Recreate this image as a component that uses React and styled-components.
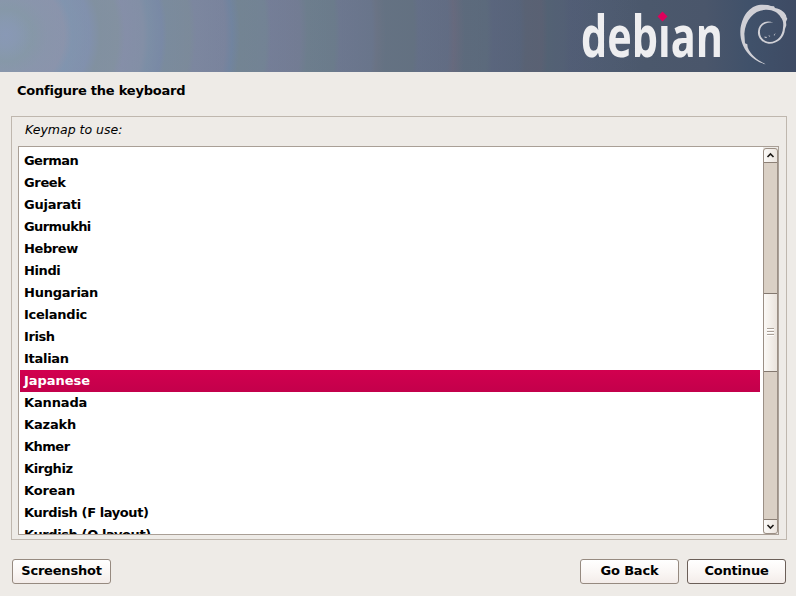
import React from "react";
import styled, { createGlobalStyle } from "styled-components";

const GlobalStyle = createGlobalStyle`
  * { box-sizing: border-box; }
  body {
    margin: 0;
    background: #eeebe7;
    color: #000;
    font: bold 13px "DejaVu Sans", sans-serif;
    overflow: hidden;
  }
`;

const Window = styled.div`
  display: flex;
  flex-direction: column;
  width: 796px;
  height: 596px;
  background: #eeebe7;
`;

const Banner = styled.header`
  display: flex;
  justify-content: flex-end;
  flex: none;
  height: 72px;
  background: linear-gradient(90deg, #8797ae66 0px, #8290a566 120px, #757f9666 270px, #64708466 420px, #55617466 550px, #4b586c00 640px), radial-gradient(circle at 6px 35px,
    #8a9abb 0px, #899ab4 12px, #8699a5 26px, #8c95ac 42px, #8e94ad 58px,
    #7f95b2 66px, #8090b0 84px, #80909c 94px, #83919e 112px, #878eaa 119px,
    #8590a8 137px, #7a8fa8 143px, #7688a8 156px, #788b9b 161px, #7b8b98 184px,
    #7c86a0 190px, #7a839e 219px, #6c84a2 226px, #70858f 234px, #718593 260px,
    #747d98 265px, #737c94 294px, #6a7f8a 302px, #697d89 329px, #6c7790 334px,
    #69758c 366px, #6a7282 371px, #62717f 380px, #62717f 408px, #636e88 413px,
    #626c85 442px, #6b687c 448px, #5b6a7b 459px, #5b6b7c 481px, #59647e 487px,
    #57637b 514px, #5a6172 520px, #5c6072 536px, #526274 542px, #525f75 558px,
    #505c76 565px, #4e5b72 590px, #4b586c 640px, #4a566b 700px, #40516a 745px,
    #3e4b64 790px);
`;

const Heading = styled.h1`
  margin: 0;
  padding: 10px 17px 0;
  height: 44px;
  flex: none;
  font-size: 13px;
  line-height: 17px;
  letter-spacing: -0.23px;
`;

const Frame = styled.section`
  display: flex;
  flex-direction: column;
  flex: none;
  height: 424px;
  margin: 0 9px 0 11px;
  padding: 0 7px 4px 6px;
  border: 1px solid #bfb7ae;
`;

const Prompt = styled.label`
  flex: none;
  height: 29px;
  padding: 4px 6px 4px 7px;
  font-size: 12.5px;
  font-weight: normal;
  font-style: italic;
  line-height: 17px;
`;

const ListBox = styled.div`
  display: flex;
  flex: 1;
  min-height: 0;
  border: 1px solid #a99f96;
  background: #eeebe7;
`;

const Options = styled.ul`
  flex: 1;
  margin: 0;
  padding: 3px 3px 0 1px;
  overflow: hidden;
  list-style: none;
  background: #fff;
`;

const Option = styled.li`
  height: 22px;
  padding-left: 4px;
  line-height: 21px;
  letter-spacing: ${(p) => p.$tracking}px;
  color: ${(p) => (p.$selected ? "#fff" : "#000")};
  background: ${(p) => (p.$selected ? "linear-gradient(#d2004f, #c3004b)" : "none")};
`;

const Scrollbar = styled.div`
  display: flex;
  flex-direction: column;
  width: 15px;
  margin: 1px 0 0;
  border: 1px solid #9b8f85;
  border-radius: 3px;
  background: #dad0c5;
`;

const Arrow = styled.span`
  display: grid;
  place-items: center;
  height: 14px;
  background: linear-gradient(90deg, #fbfaf8, #ece5df);
  border-radius: ${(p) => (p.$down ? "0 0 3px 3px" : "3px 3px 0 0")};
  border-${(p) => (p.$down ? "top" : "bottom")}: 1px solid #8c8076;
`;

const Track = styled.div`
  flex: 1;
  padding-top: 130px;
`;

const Thumb = styled.div`
  display: grid;
  place-items: center;
  height: 79px;
  padding-bottom: 2px;
  border: solid #83786f;
  border-width: 1px 0;
  background: linear-gradient(90deg, #fbf9f6, #eae3dc);
`;

const Actions = styled.footer`
  display: flex;
  gap: 8px;
  padding: 19px 10px 0 12px;
`;

const Button = styled.button`
  width: 99px;
  height: 25px;
  padding: 0 0 2px;
  margin-right: ${(p) => (p.$leading ? "auto" : "0")};
  border: 1px solid ${(p) => (p.$primary ? "#6b5f58" : "#968a80")};
  border-radius: 3px;
  background: linear-gradient(#fff, #faf6f4 55%, #f3ece9);
  color: #000;
  font: inherit;
  letter-spacing: -0.2px;
`;

const Logo = () => (
  <svg width="226" height="72" viewBox="570 0 226 72" overflow="visible">
    <text x="581" y="57" fill="#eeeef0" fontFamily="Open Sans, sans-serif" fontSize="58" fontWeight="700" textLength="142" lengthAdjust="spacingAndGlyphs">debıan</text>
    <path d="M662.5 11.5L667.5 16.5L662.5 21.5L657.5 16.5Z" fill="#df005b" />
    <g transform="translate(734 0) scale(.33333)" fill="#d0d0d6">
      <path d="M95 193C58 184 17 148 19 93C22 48 48 16 80 14L102 15L111 18L120 19L123 24C142 26 158 42 157 51L160 56L156 65L157 76L153 87C151 114 130 132 104 131C85 129 70 112 72 94C74 72 94 57 118 68C96 64 79 76 78 92C76 111 89 125 108 126C130 126 146 106 147 84C149 68 147 60 140 52C132 36 112 27 90 30C60 32 34 60 31 101L33 130L40 133L41 142C50 166 70 180 95 193Z" />
      <path d="M90 110L97 110L99 114L93 113ZM103 106L109 108L106 110ZM119 105L125 99L121 107Z" />
    </g>
  </svg>
);

const Chevron = ({ down }) => (
  <svg width="9" height="7" viewBox="0 0 9 7">
    <path d={down ? "M1.5 2L4.5 5L7.5 2" : "M1.5 5L4.5 2L7.5 5"} fill="none" stroke="#1c1916" strokeWidth="1.6" />
  </svg>
);

const Grip = () => (
  <svg width="7" height="8" viewBox="0 0 7 8">
    <path d="M0 .5H7M0 3.5H7M0 6.5H7" stroke="#aaa097" />
    <path d="M0 1.5H7M0 4.5H7M0 7.5H7" stroke="#fff" />
  </svg>
);

const keymaps = [
  { name: "German", tracking: -0.55 },
  { name: "Greek", tracking: -0.35 },
  { name: "Gujarati", tracking: -0.25 },
  { name: "Gurmukhi", tracking: -0.6 },
  { name: "Hebrew", tracking: -0.4 },
  { name: "Hindi", tracking: -0.4 },
  { name: "Hungarian", tracking: -0.25 },
  { name: "Icelandic", tracking: -0.25 },
  { name: "Irish", tracking: -0.4 },
  { name: "Italian", tracking: -0.28 },
  { name: "Japanese", tracking: -0.05 },
  { name: "Kannada", tracking: -0.15 },
  { name: "Kazakh", tracking: -0.15 },
  { name: "Khmer", tracking: -0.5 },
  { name: "Kirghiz", tracking: -0.42 },
  { name: "Korean", tracking: -0.15 },
  { name: "Kurdish (F layout)", tracking: -0.4 },
  { name: "Kurdish (Q layout)", tracking: -0.4 },
];

export default function App() {
  return (
    <Window>
      <GlobalStyle />
      <Banner><Logo /></Banner>
      <Heading>Configure the keyboard</Heading>
      <Frame>
        <Prompt>Keymap to use:</Prompt>
        <ListBox>
          <Options>
            {keymaps.map(({ name, tracking }) => (
              <Option key={name} $tracking={tracking} $selected={name === "Japanese"}>{name}</Option>
            ))}
          </Options>
          <Scrollbar>
            <Arrow><Chevron /></Arrow>
            <Track><Thumb><Grip /></Thumb></Track>
            <Arrow $down><Chevron down /></Arrow>
          </Scrollbar>
        </ListBox>
      </Frame>
      <Actions>
        <Button $leading>Screenshot</Button>
        <Button>Go Back</Button>
        <Button $primary>Continue</Button>
      </Actions>
    </Window>
  );
}
